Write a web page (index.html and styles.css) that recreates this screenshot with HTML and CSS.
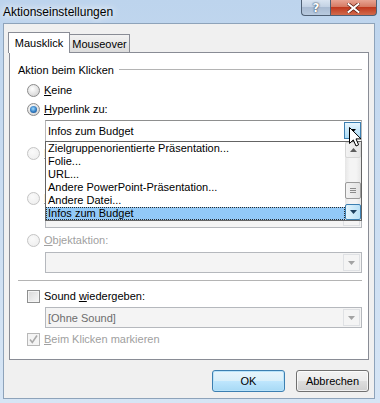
FILE: index.html
```html
<!DOCTYPE html>
<html>
<head>
<meta charset="utf-8">
<link rel="stylesheet" href="styles.css">
</head>
<body>
<div class="window">
  <div class="titlebar">
    <span class="title">Aktionseinstellungen</span>
    <div class="caption-btns">
      <div class="cbtn help">?</div>
      <div class="cbtn close"><svg width="13" height="10" viewBox="0 0 13 10"><path d="M1.5 1L11.5 9M11.5 1L1.5 9" stroke="#5b1d12" stroke-width="3.4" stroke-linecap="square"/><path d="M1.5 1L11.5 9M11.5 1L1.5 9" stroke="#fff" stroke-width="2" stroke-linecap="square"/></svg></div>
    </div>
  </div>
  <div class="client">
    <div class="tabs">
      <div class="tab active">Mausklick</div>
      <div class="tab">Mouseover</div>
    </div>
    <div class="panel">
      <div class="group-head"><span>Aktion beim Klicken</span><i class="line"></i></div>
      <div class="opt opt-first"><span class="radio"></span><span class="lbl"><u>K</u>eine</span></div>
      <div class="opt opt-hyper"><span class="radio checked"></span><span class="lbl"><u>H</u>yperlink zu:</span></div>
      <div class="field combo open">
        <span class="ctext">Infos zum Budget</span>
        <span class="dd hot"><svg width="7" height="4"><path d="M0 0h7L3.5 4z" fill="#000"/></svg></span>
        <div class="dropdown">
          <div class="items">
            <div class="item">Zielgruppenorientierte Präsentation...</div>
            <div class="item">Folie...</div>
            <div class="item">URL...</div>
            <div class="item">Andere PowerPoint-Präsentation...</div>
            <div class="item">Andere Datei...</div>
            <div class="item selected">Infos zum Budget</div>
          </div>
          <div class="sb">
            <div class="sbtn"><svg width="7" height="4"><path d="M0 4h7L3.5 0z" fill="#5c5c5c"/></svg></div>
            <div class="track t1"></div>
            <div class="thumb"><i></i><i></i><i></i></div>
            <div class="track t2"></div>
            <div class="sbtn hot"><svg width="7" height="4"><path d="M0 0h7L3.5 4z" fill="#1c3f5e"/></svg></div>
          </div>
        </div>
      </div>
      <div class="opt opt-prog dis"><span class="radio"></span><span class="lbl covered"><u>P</u>rogramm ausführen:</span></div>
      <div class="field textbox dis prog"></div>
      <div class="opt opt-makro dis"><span class="radio"></span><span class="lbl covered"><u>M</u>akro ausführen:</span></div>
      <div class="field combo dis makro"><span class="ctext"></span><span class="dd"><svg width="7" height="4"><path d="M0 0h7L3.5 4z" fill="#a3a3a3"/></svg></span></div>
      <div class="opt opt-obj dis"><span class="radio"></span><span class="lbl"><u>O</u>bjektaktion:</span></div>
      <div class="field combo dis obj"><span class="ctext"></span><span class="dd"><svg width="7" height="4"><path d="M0 0h7L3.5 4z" fill="#a3a3a3"/></svg></span></div>
      <div class="sep"></div>
      <div class="opt opt-sound"><span class="check"></span><span class="lbl">Sound <u>w</u>iedergeben:</span></div>
      <div class="field combo dis sound"><span class="ctext">[Ohne Sound]</span><span class="dd"><svg width="7" height="4"><path d="M0 0h7L3.5 4z" fill="#a3a3a3"/></svg></span></div>
      <div class="opt opt-mark dis"><span class="check checked"><svg width="11" height="11" viewBox="0 0 11 11"><path d="M2 5.5L4.3 8.5L9 1.5" stroke="#a9a9a9" stroke-width="1.6" fill="none"/></svg></span><span class="lbl"><u>B</u>eim Klicken markieren</span></div>
    </div>
    <div class="buttons">
      <div class="btn default">OK</div>
      <div class="btn">Abbrechen</div>
    </div>
  </div>
  <svg class="cursor" width="14" height="21" viewBox="0 0 14 21"><path d="M0.5 0.5L0.5 16.5L4.3 12.9L7 19L9.6 17.8L7 11.9L12 11.9Z" fill="#fff" stroke="#000" stroke-width="1" stroke-linejoin="miter"/></svg>
</div>
</body>
</html>
```
FILE: styles.css
```css
body {
  margin: 0;
  font: 11px "Liberation Sans", Arial, sans-serif;
  color: #000;
}
.window {
  position: relative;
  width: 380px;
  height: 403px;
  box-sizing: border-box;
  padding: 0 5px 4px 3px;
  background: linear-gradient(#bdd4ed, #c9dcf1 40%, #d6e5f5);
  display: flex;
  flex-direction: column;
  overflow: hidden;
}
.titlebar {
  height: 23px;
  flex: none;
  display: flex;
  align-items: center;
}
.title {
  font-size: 12px;
  color: #000;
  text-shadow: 0 0 6px #fff, 0 0 10px rgba(255,255,255,.9);
}
.caption-btns {
  margin-left: auto;
  margin-right: -2px;
  align-self: flex-start;
  display: flex;
}
.cbtn {
  height: 16px;
  box-sizing: border-box;
  border: 1px solid #4f6074;
  border-top: none;
  display: flex;
  align-items: center;
  justify-content: center;
}
.help {
  width: 29px;
  border-right: none;
  border-radius: 0 0 0 4px;
  background: linear-gradient(#d9e4f1, #c3d2e4 45%, #a9bbd2 50%, #b8cadf);
  color: #fff;
  font: bold 12px "DejaVu Sans", sans-serif;
  text-shadow: 0 0 2px #30425a, 0 0 1px #30425a;
}
.close {
  width: 47px;
  border-radius: 0 0 4px 0;
  background: linear-gradient(#e8a493, #d67a63 45%, #c0391e 50%, #d26b4d);
}
.client {
  flex: 1;
  border: 1px solid #8ea3ba;
  background: #f0f0f0;
  padding: 8px 5px 5px 5px;
  display: flex;
  flex-direction: column;
}
.tabs {
  display: flex;
  align-items: flex-end;
  height: 21px;
  margin: 0 0 -1px -1px;
  position: relative;
  z-index: 1;
}
.tab {
  height: 19px;
  width: 61px;
  box-sizing: border-box;
  margin-left: -1px;
  border: 1px solid #898c95;
  background: linear-gradient(#f2f2f2, #e8e8e8 50%, #dcdcdc);
  display: flex;
  align-items: center;
  justify-content: center;
}
.tab.active {
  height: 21px;
  width: 62px;
  margin-left: 0;
  border-bottom: none;
  background: #fff;
  position: relative;
  z-index: 2;
  padding-bottom: 1px;
}
.panel {
  background: #fff;
  border: 1px solid #898c95;
  padding: 10px 6px 13px 8px;
  display: flex;
  flex-direction: column;
}
.group-head {
  height: 13px;
  display: flex;
  align-items: center;
}
.group-head .line {
  flex: 1;
  height: 0;
  border-top: 1px solid #b4b4b4;
  margin-left: 5px;
  margin-top: -1px;
}
.opt {
  height: 14px;
  display: flex;
  align-items: center;
  margin-left: 9px;
}
.opt .lbl { margin-left: 4px; white-space: nowrap; }
.opt .lbl.covered {
  width: 2px;
  overflow: hidden;
}
.opt.dis .lbl { color: #a0a0a0; }
.opt-first { margin-top: 7px; }
.opt-hyper { margin-top: 5px; }
.opt-prog { margin-top: 4px; }
.opt-makro { margin-top: 5px; }
.opt-obj { margin-top: 5px; }
.opt-sound { margin-top: 8px; }
.opt-mark { margin-top: 4px; }
.radio {
  width: 13px;
  height: 13px;
  box-sizing: border-box;
  border-radius: 50%;
  border: 1px solid #8b8b8b;
  background: radial-gradient(circle at 40% 35%, #ffffff, #dadada 70%, #c8c8c8);
  display: flex;
  align-items: center;
  justify-content: center;
  flex: none;
}
.radio.checked::after {
  content: "";
  width: 7px;
  height: 7px;
  border-radius: 50%;
  background: radial-gradient(circle at 45% 40%, #9fdcff, #2f79c0 55%, #123f78);
}
.opt.dis .radio {
  border-color: #c4c4c4;
  background: radial-gradient(circle at 40% 35%, #fafafa, #ececec);
}
.check {
  width: 13px;
  height: 13px;
  box-sizing: border-box;
  border: 1px solid #8e8f8f;
  background: linear-gradient(135deg, #d8d8d8, #f7f7f7);
  box-shadow: inset 0 0 0 1px #f4f4f4;
  flex: none;
  display: flex;
  align-items: center;
  justify-content: center;
}
.opt.dis .check {
  border-color: #b8b8b8;
  background: #f4f4f4;
  box-shadow: none;
}
.field {
  margin-left: 27px;
  box-sizing: border-box;
  border: 1px solid #abadb3;
  display: flex;
  align-items: center;
  background: #fff;
}
.combo { height: 21px; }
.combo.open {
  height: 22px;
  margin-top: 4px;
  position: relative;
  border-color: #8e8f8f #b9b9b9 #dedede #b9b9b9;
  z-index: 3;
}
.ctext {
  flex: 1;
  padding-left: 2px;
  white-space: nowrap;
}
.dd {
  width: 17px;
  align-self: stretch;
  box-sizing: border-box;
  display: flex;
  align-items: center;
  justify-content: center;
  margin: 1px 1px 1px 0;
  border: 1px solid #dfe1e4;
  background: #f4f4f4;
}
.dd.hot {
  margin: 1px 0 2px 0;
  border-color: #3c7fb1;
  background: linear-gradient(#e9f6fe, #c8e7f9 50%, #a9dbf6);
}
.field.dis {
  background: #f4f4f4;
  border-color: #b5b8bd;
}
.field.dis .ctext { color: #6d6d6d; }
.textbox.prog { height: 22px; margin-top: 4px; }
.combo.makro { margin-top: 2px; }
.combo.obj { margin-top: 5px; }
.combo.sound { margin-top: 4px; }
.sep {
  height: 0;
  border-top: 1px solid #b4b4b4;
  margin-top: 7px;
}
.dropdown {
  position: absolute;
  left: -1px;
  top: 100%;
  width: 317px;
  height: 80px;
  box-sizing: border-box;
  border: 1px solid #646464;
  background: #fff;
  display: flex;
}
.items {
  flex: 1;
  display: flex;
  flex-direction: column;
}
.item {
  height: 13px;
  line-height: 13px;
  padding-left: 2px;
  white-space: nowrap;
  overflow: hidden;
}
.item.selected {
  background: #92c9f7;
  outline: 1px dotted #2b2b2b;
  outline-offset: -1px;
}
.sb {
  width: 16px;
  display: flex;
  flex-direction: column;
  background: linear-gradient(90deg, #e6e6e6, #f4f4f4 30%, #f4f4f4 70%, #e6e6e6);
}
.sbtn {
  height: 16px;
  box-sizing: border-box;
  border: 1px solid #d6d6d6;
  border-radius: 2px;
  background: linear-gradient(90deg, #f2f2f2, #e6e6e6);
  display: flex;
  align-items: center;
  justify-content: center;
}
.sbtn.hot {
  border-color: #3c7fb1;
  background: linear-gradient(90deg, #e3f4fc, #b9e0f6);
}
.t1 { height: 24px; }
.t2 { flex: 1; }
.thumb {
  height: 17px;
  box-sizing: border-box;
  border: 1px solid #9a9a9a;
  border-radius: 2px;
  background: linear-gradient(90deg, #f3f3f3, #e2e2e2);
  display: flex;
  flex-direction: column;
  align-items: center;
  justify-content: center;
  gap: 1px;
}
.thumb i {
  display: block;
  width: 6px;
  height: 1px;
  background: #8a8a8a;
}
.buttons {
  display: flex;
  justify-content: flex-end;
  gap: 11px;
  margin-top: 10px;
}
.btn {
  width: 73px;
  height: 22px;
  box-sizing: border-box;
  border: 1px solid #707070;
  border-radius: 3px;
  background: linear-gradient(#f2f2f2, #ebebeb 48%, #dddddd 52%, #cfcfcf);
  box-shadow: inset 0 0 0 1px rgba(255,255,255,.7);
  display: flex;
  align-items: center;
  justify-content: center;
}
.btn.default {
  border-color: #3c7fb1;
  background: linear-gradient(#e8f5fc, #d9effa 48%, #bee6fd 52%, #a7d9f5);
  box-shadow: inset 0 0 0 1px #b9e3fa;
}
.cursor {
  position: absolute;
  left: 349px;
  top: 127px;
  z-index: 10;
}
```
